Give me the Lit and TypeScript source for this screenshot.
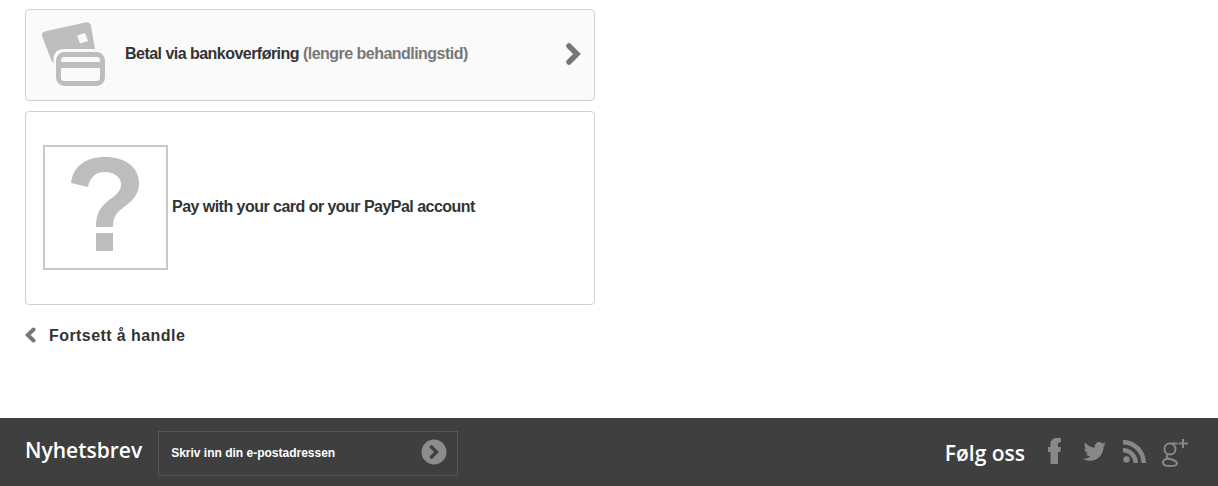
import {LitElement, html, css} from 'lit';
import {customElement} from 'lit/decorators.js';

@customElement('app-root')
export class AppRoot extends LitElement {
  static styles = css`
    :host {
      display: flex;
      flex-direction: column;
      height: 486px;
      font-family: "Liberation Sans", Arial, sans-serif;
      color: #333;
      background: #fff;
      overflow: hidden;
    }

    main {
      flex: 1;
      width: 570px;
      padding: 9px 0 0 25px;
    }

    .card {
      box-sizing: border-box;
      display: flex;
      align-items: center;
      border: 1px solid #d2d2d2;
      border-radius: 4px;
      font-size: 16px;
      font-weight: bold;
      letter-spacing: -0.53px;
    }

    .card span {
      margin-top: -2px;
    }

    .bank {
      position: relative;
      height: 92px;
      padding-left: 15px;
      background: #fafafa;
    }

    .bank .icon {
      width: 66px;
      height: 66px;
      margin-right: 18px;
    }

    .bank .note {
      margin-left: 4px;
      color: #777;
    }

    .bank .arrow {
      position: absolute;
      right: 12px;
      top: 33px;
      width: 18px;
      height: 22px;
    }

    .paypal {
      height: 194px;
      margin-top: 10px;
      padding-left: 17px;
    }

    .placeholder {
      box-sizing: border-box;
      width: 125px;
      height: 125px;
      margin: -2px 4px 0 0;
      border: 2px solid #c8c8c8;
    }

    .back {
      display: flex;
      align-items: center;
      gap: 13px;
      margin-top: 21px;
      font-size: 16px;
      font-weight: bold;
      letter-spacing: 0.43px;
      line-height: 20px;
    }

    .back svg {
      width: 11px;
      height: 16px;
      margin-top: -2px;
    }

    footer {
      box-sizing: border-box;
      display: flex;
      align-items: center;
      justify-content: space-between;
      height: 68px;
      padding: 0 30px 0 25px;
      background: #3f3f3f;
      color: #fff;
    }

    .newsletter,
    .social {
      display: flex;
      align-items: center;
    }

    h3 {
      margin: 0;
      font-family: "Open Sans", sans-serif;
      font-size: 21px;
      font-weight: 600;
    }

    .newsletter h3 {
      margin: -5px 16px 0 0;
    }

    .field {
      box-sizing: border-box;
      display: flex;
      align-items: center;
      justify-content: space-between;
      width: 300px;
      height: 45px;
      margin-top: 3px;
      padding: 0 10px 0 12px;
      border: 1px solid #555;
      font-size: 12px;
      font-weight: bold;
    }

    .field span {
      margin-top: -2px;
    }

    .field svg {
      width: 26px;
      height: 26px;
      margin-top: -4px;
    }

    .social h3 {
      margin: 2px 23px 0 0;
    }

    .social svg {
      display: block;
      filter: drop-shadow(1px 1px 0 rgba(70, 50, 30, 0.35));
    }

    .fb {
      width: 13px;
      height: 26px;
      margin: -2px 22px 0 0;
    }

    .tw {
      width: 23px;
      height: 20px;
      margin-right: 17px;
    }

    .rss {
      width: 23px;
      height: 23px;
      margin: -1px 16px 0 0;
    }

    .gp {
      width: 26px;
      height: 28px;
      margin-top: 1px;
    }
  `;

  render() {
    return html`
      <main>
        <div class="card bank">
          <svg class="icon" viewBox="0 0 66 66">
            <path fill="#bdbdbd" d="M3.500 9.500 L44 .5 Q49 -.5 50 4 L54 27 H23 Q13 27 12.500 37 V41 Q10.500 40 9.500 36 L1 14 Q0 10.500 3.500 9.500 Z"/>
            <path fill="#fafafa" d="M36 13.500 L44 11 L47 19 L39 21.500 Z"/>
            <rect x="17.500" y="32.500" width="44" height="29" rx="6" fill="none" stroke="#bdbdbd" stroke-width="5"/>
            <rect x="17.500" y="40" width="44" height="6" fill="#bdbdbd"/>
          </svg>
          <span>Betal via bankoverføring</span><span class="note">(lengre behandlingstid)</span>
          <svg class="arrow" viewBox="0 0 18 22">
            <path fill="none" stroke="#777" stroke-width="5.500" stroke-linecap="round" stroke-linejoin="miter" d="M5 3 L13 11 L5 19"/>
          </svg>
        </div>
        <div class="card paypal">
          <svg class="placeholder" viewBox="0 0 121 121">
            <path fill="#bdbdbd" d="M26 36 C28 19 41 10 60 10 C80 10 94 20 94 36 C94 48 87 54 79 60 C71 66 68 70 68 80 H51 C51 68 54 61 64 53 C72 47 76 44 76 37 C76 30 69 25 60 25 C50 25 45 31 43 40 Z M51 86 H68 V104 H51 Z"/>
          </svg>
          <span>Pay with your card or your PayPal account</span>
        </div>
        <div class="back">
          <svg viewBox="0 0 11 16">
            <path fill="none" stroke="#777" stroke-width="4" stroke-linecap="round" d="M8.500 2.500 L2.800 8 L8.500 13.500"/>
          </svg>
          <span>Fortsett å handle</span>
        </div>
      </main>
      <footer>
        <div class="newsletter">
          <h3>Nyhetsbrev</h3>
          <div class="field">
            <span>Skriv inn din e-postadressen</span>
            <svg viewBox="0 0 26 26">
              <circle cx="13" cy="13" r="12.500" fill="#8c8c8c"/>
              <path fill="none" stroke="#3f3f3f" stroke-width="3.500" d="M9.500 7 L15.500 13 L9.500 19"/>
            </svg>
          </div>
        </div>
        <div class="social">
          <h3>Følg oss</h3>
          <svg class="fb" viewBox="0 0 13 26">
            <path fill="#888" d="M2.500 26 V14 H0 V9 H2.500 V6.500 C2.500 2 5 0 9 0 H13 V4.500 H11.500 C10.500 4.500 10 5.300 10 7 V9 H13 L12.400 14 H10 V26 Z"/>
          </svg>
          <svg class="tw" viewBox="0 0 26 22" preserveAspectRatio="none">
            <path fill="#888" d="M26 2.600 C25 3 24 3.300 23 3.500 C24 2.800 25 1.700 25.400 .4 C24.400 1 23.300 1.500 22 1.700 C21 .7 19.700 0 18.200 0 C15 0 12.700 3 13.400 6.200 C9 6 5 3.800 2.300 .6 C1 3 1.600 6 4 7.600 C3 7.600 2.300 7.300 1.500 6.900 C1.400 9.400 3.200 11.700 5.800 12.200 C5 12.400 4.200 12.500 3.400 12.300 C4 14.400 6 16 8.400 16 C6 17.800 3 18.600 0 18.300 C2.400 19.800 5.200 20.700 8.200 20.700 C18 20.700 23.500 12.400 23.300 5 C24.400 4.400 25.300 3.500 26 2.600 Z"/>
          </svg>
          <svg class="rss" viewBox="0 0 23 23">
            <circle cx="3.500" cy="19.500" r="3.200" fill="#888"/>
            <path fill="#888" d="M0 8 V12.500 C5.800 12.500 10.500 17.200 10.500 23 H15 C15 14.700 8.300 8 0 8 Z M0 0 V4.500 C10.200 4.500 18.500 12.800 18.500 23 H23 C23 10.300 12.700 0 0 0 Z"/>
          </svg>
          <svg class="gp" viewBox="0 0 26 28">
            <path fill="none" stroke="#888" stroke-width="2" d="M15.500 4.500 H8 C4 4.500 2.500 7.500 2.500 10 C2.500 13.500 5 15.500 8 15.500 C11.500 15.500 13.500 13 13.500 10 C13.500 7 11 4.500 8.500 4.500 M5.500 15.500 C4 17.500 4.500 19 6.500 19.500 L11 21 C14 22 15 23 15 24.500 C15 26.500 12.500 27 8 27 C3.500 27 1 26 1 23.500 C1 21 3.500 19.800 7.500 19.800"/>
            <path fill="#888" d="M20 0 H22 V3.500 H26 V5.500 H22 V9 H20 V5.500 H16.500 V3.500 H20 Z"/>
          </svg>
        </div>
      </footer>
    `;
  }
}
